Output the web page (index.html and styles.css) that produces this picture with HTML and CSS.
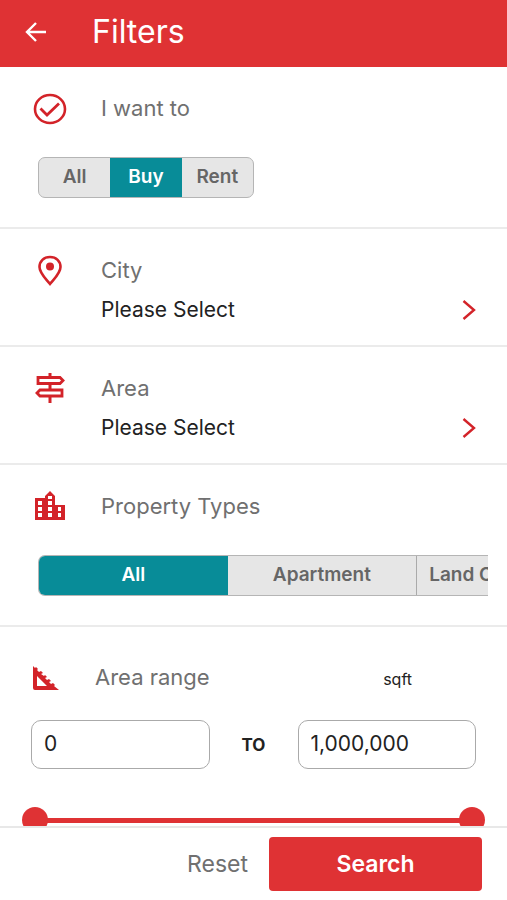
FILE: index.html
```html
<!DOCTYPE html>
<html lang="en">
<head>
  <meta charset="utf-8">
  <meta name="viewport" content="width=device-width, initial-scale=1">
  <title>Filters</title>
  <link rel="stylesheet" href="styles.css">
</head>
<body>
  <header class="topbar">
    <button class="back" type="button" aria-label="Back">
      <svg width="24" height="22" viewBox="0 0 24 22" fill="none" stroke="currentColor" stroke-width="2.400"><path d="M22 11H3M12 2L3 11L12 20"/></svg>
    </button>
    <h1 class="title">Filters</h1>
  </header>

  <main class="filters">
    <section class="section">
      <div class="row">
        <svg class="icon" viewBox="0 0 34 34" fill="none" stroke="currentColor"><ellipse cx="17" cy="17" rx="15" ry="14" stroke-width="2.6"/><path d="M7.500 16.500L14 23L26 11.500" stroke-width="2.800"/></svg>
        <h2 class="label">I want to</h2>
      </div>
      <div class="segments segments-short">
        <button class="segment" type="button">All</button>
        <button class="segment active" type="button">Buy</button>
        <button class="segment" type="button">Rent</button>
      </div>
    </section>

    <section class="section">
      <div class="row">
        <svg class="icon" viewBox="0 0 34 34"><path d="M17 3C10.700 3 6.500 7.300 6.500 13C6.500 19 12 24 17 30C22 24 27.500 19 27.500 13C27.500 7.300 23.300 3 17 3Z" fill="none" stroke="currentColor" stroke-width="2.600"/><circle cx="17" cy="12.500" r="4" fill="currentColor"/></svg>
        <label class="label" for="city">City</label>
      </div>
      <div class="picker">
        <select class="select" id="city"><option>Please Select</option></select>
        <svg class="chevron" viewBox="0 0 14 20" fill="none" stroke="currentColor" stroke-width="2.400"><path d="M1.500 1L12 10L1.500 19"/></svg>
      </div>
    </section>

    <section class="section">
      <div class="row">
        <svg class="icon" viewBox="0 0 34 34" fill="none" stroke="currentColor"><path d="M17 1V6M17 12V18M17 24V31" stroke-width="3"/><path d="M5 5.500H27L30 8.500L27 11.500H5ZM29 18H7L4 21L7 24H29Z" stroke-width="2.800"/></svg>
        <label class="label" for="area">Area</label>
      </div>
      <div class="picker">
        <select class="select" id="area"><option>Please Select</option></select>
        <svg class="chevron" viewBox="0 0 14 20" fill="none" stroke="currentColor" stroke-width="2.400"><path d="M1.500 1L12 10L1.500 19"/></svg>
      </div>
    </section>

    <section class="section">
      <div class="row">
        <svg class="icon" viewBox="0 0 34 34" fill="currentColor"><path fill-rule="evenodd" d="M2 8H12V6L17 1L22 6V15H32V30H2ZM5 11V15H9V11ZM5 17V21H9V17ZM5 23V27H9V23ZM15 6V9H19V6ZM15 11V15H19V11ZM15 17V21H19V17ZM15 23V27H19V23ZM25 17V21H28V17ZM25 23V27H28V23Z"/></svg>
        <h2 class="label">Property Types</h2>
      </div>
      <div class="segments segments-wide">
        <button class="segment active" type="button">All</button>
        <button class="segment" type="button">Apartment</button>
        <button class="segment cut" type="button">Land C</button>
      </div>
    </section>

    <section class="section range">
      <div class="row range-head">
        <svg class="icon" viewBox="0 0 34 34" fill="currentColor"><path fill-rule="evenodd" d="M2 6L4 8L5 7L7 9L6 10L8 12L10 11L12 13L10 14L13 16L14 15L16 17L14 18L16 20L18 19L20 21L18 22L20 24L22 23L24 25L23 26L28 30H4Q2 30 2 28ZM6 16V26H16Z"/></svg>
        <h2 class="label">Area range</h2>
        <span class="unit">sqft</span>
      </div>
      <div class="bounds">
        <input class="bound" type="text" value="0" aria-label="Minimum area">
        <span class="to">TO</span>
        <input class="bound" type="text" value="1,000,000" aria-label="Maximum area">
      </div>
      <div class="slider">
        <input class="thumb" type="range" min="0" max="1000000" value="0" aria-label="Minimum area slider">
        <input class="thumb" type="range" min="0" max="1000000" value="1000000" aria-label="Maximum area slider">
      </div>
    </section>
  </main>

  <footer class="actions">
    <button class="reset" type="button">Reset</button>
    <button class="search" type="button">Search</button>
  </footer>
</body>
</html>
```
FILE: styles.css
```css
* {
  box-sizing: border-box;
}

body {
  --red: #df3234;
  --icon: #d32329;
  --teal: #088c98;
  display: flex;
  flex-direction: column;
  height: 100vh;
  margin: 0;
  background: #fff;
  color: #222;
  font-family: Inter, "Open Sans", sans-serif;
  font-size: 21px;
  line-height: 24px;
}

button,
input,
select {
  margin: 0;
  padding: 0;
  border: 0;
  background: none;
  color: inherit;
  font: inherit;
}

h1,
h2 {
  margin: 0;
  font-weight: 400;
}

.topbar {
  display: flex;
  flex: none;
  align-items: center;
  gap: 44px;
  height: 67px;
  padding: 0 24px 3px;
  background: var(--red);
  color: #fff;
}

.back {
  display: flex;
}

.title {
  font-size: 32px;
  line-height: 36px;
}

.filters {
  flex: 1;
  min-height: 0;
  overflow-y: auto;
  scrollbar-width: none;
}

.section {
  padding: 25px 19px 29px 33px;
  border-bottom: 2px solid #ebebeb;
}

.row {
  display: flex;
  gap: 34px;
}

.icon {
  flex: none;
  width: 34px;
  height: 34px;
  color: var(--icon);
}

.label {
  padding-top: 4px;
  color: #707070;
  font-size: 22px;
}

.segments {
  display: flex;
  height: 41px;
  margin: 31px 0 0 5px;
  overflow: hidden;
  border: 1px solid #b5b5b5;
  border-radius: 7px;
  background: #e6e6e6;
}

.segments-short {
  width: 216px;
}

.segment {
  flex: 1;
  padding-bottom: 2px;
  color: #666;
  font-size: 19px;
  font-weight: 600;
  white-space: nowrap;
}

.segment.active {
  background: var(--teal);
  color: #fff;
}

.segments-wide {
  border-right: 0;
  border-radius: 7px 0 0 7px;
}

.segments-wide .segment {
  flex: 0 0 42%;
}

.segments-wide .cut {
  flex: 1;
  min-width: 0;
  padding-left: 12px;
  overflow: hidden;
  border-left: 1px solid #aaa;
  text-align: left;
}

.picker {
  display: flex;
  align-items: center;
  position: relative;
  margin: 9px -7px -6px 0;
  padding-left: 68px;
}

.select {
  width: 100%;
  height: 25px;
  appearance: none;
}

.chevron {
  position: absolute;
  right: 19px;
  width: 14px;
  height: 20px;
  color: var(--icon);
  pointer-events: none;
}

.range {
  padding: 33px 31px 20px;
}

.range-head {
  gap: 30px;
}

.range-head .label {
  flex: 1;
  padding-top: 5px;
}

.unit {
  padding: 7px 64px 0 0;
  font-size: 16px;
}

.bounds {
  display: flex;
  align-items: center;
  margin-top: 26px;
}

.bound {
  flex: 1;
  min-width: 0;
  height: 49px;
  padding: 0 12px 3px;
  border: 1px solid #aaa;
  border-radius: 10px;
}

.to {
  width: 88px;
  font-size: 17px;
  font-weight: 700;
  text-align: center;
}

.slider {
  display: grid;
  align-items: center;
  height: 26px;
  margin: 38px -9px 0;
  background: linear-gradient(var(--red), var(--red)) center / calc(100% - 26px) 5px no-repeat;
}

.thumb {
  grid-area: 1 / 1;
  width: 100%;
  height: 26px;
  appearance: none;
  pointer-events: none;
}

.thumb::-webkit-slider-thumb {
  width: 26px;
  height: 26px;
  border-radius: 50%;
  background: var(--red);
  appearance: none;
  pointer-events: auto;
}

.actions {
  display: flex;
  flex: none;
  align-items: center;
  justify-content: flex-end;
  gap: 21px;
  padding: 9px 25px 9px;
  border-top: 2px solid #e8e8e8;
}

.reset {
  color: #707070;
  font-size: 23px;
}

.search {
  flex: 0 0 213px;
  height: 54px;
  border-radius: 4px;
  background: var(--red);
  color: #fff;
  font-size: 23px;
  font-weight: 600;
}
```
